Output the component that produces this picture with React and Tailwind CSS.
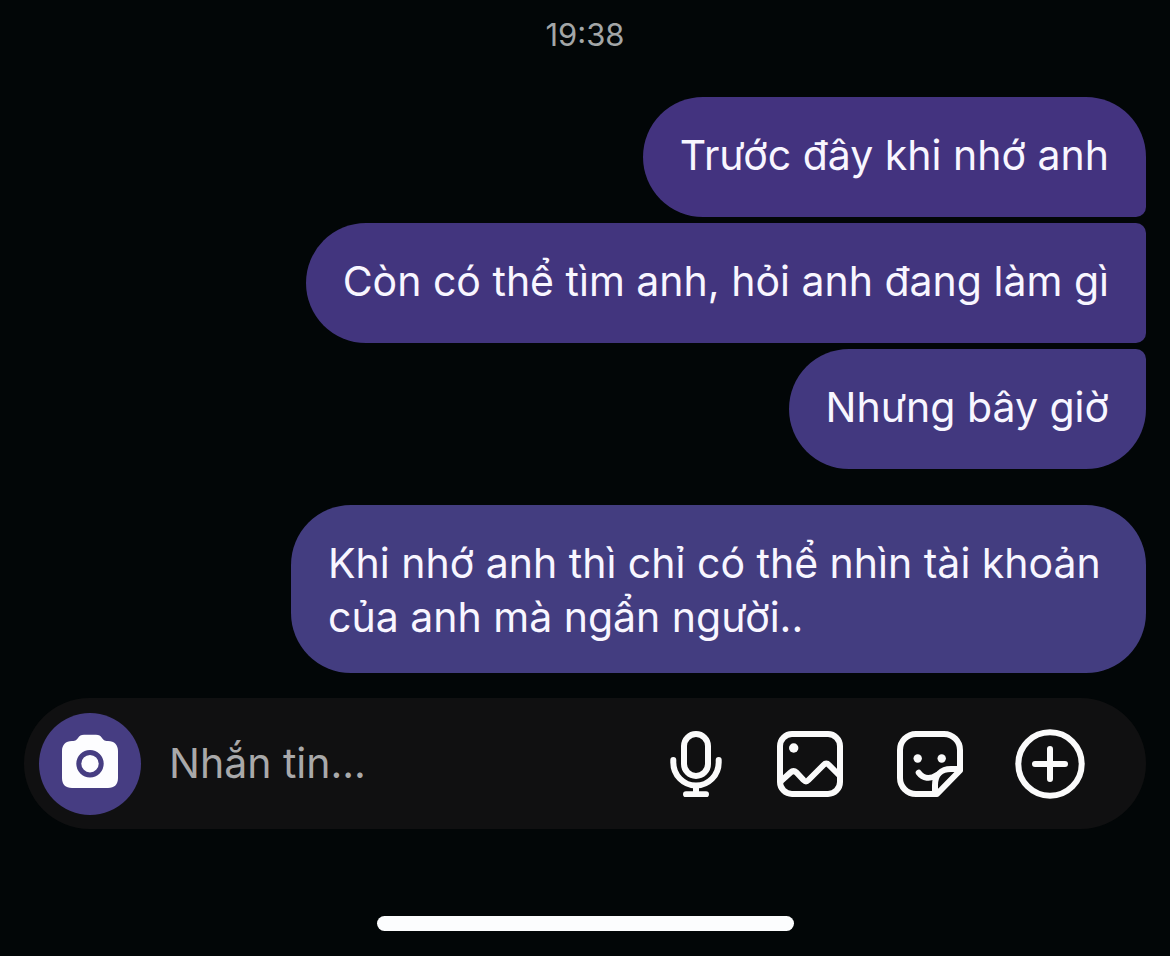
import { useState } from "react";

const messages = [
  {
    text: "Trước đây khi nhớ anh",
    style: "bg-[#43337f] rounded-[60px] rounded-br-[10px] pb-[35px]",
  },
  {
    text: "Còn có thể tìm anh, hỏi anh đang làm gì",
    style: "bg-[#42357e] rounded-l-[60px] rounded-r-[10px] pb-[35px]",
  },
  {
    text: "Nhưng bây giờ",
    style: "bg-[#42387f] rounded-[60px] rounded-tr-[10px] pb-[35px]",
  },
  {
    text: "Khi nhớ anh thì chỉ có thể nhìn tài khoản của anh mà ngẩn người..",
    style: "bg-[#433d80] rounded-[60px] pb-[29px] mt-[30px]",
  },
];

const CameraIcon = () => (
  <svg viewBox="0 0 102 102" className="w-full h-full" aria-hidden="true">
    <path
      fill="#fdfdff"
      d="M33 28C37 28 38 26.500 39 25C40.500 22.500 42 21.700 45 21.700H57C60 21.700 61.500 22.500 63 25C64 26.500 65 28 69 28C75.500 28 79 32 79 38V65C79 71.500 75.500 75 69 75H33C26.500 75 23 71.500 23 65V38C23 32 26.500 28 33 28Z"
    />
    <circle cx="51" cy="50.700" r="11.200" fill="none" stroke="#463d82" strokeWidth="5" />
  </svg>
);

const MicIcon = () => (
  <svg viewBox="0 0 54 66" className="w-full h-full" fill="none" stroke="currentColor" strokeWidth="6" strokeLinecap="round" aria-hidden="true">
    <rect x="15" y="3" width="24" height="42" rx="12" />
    <path d="M4.300 29V31.500A22.700 23 0 0 0 49.700 31.500V29" />
    <path d="M27 55V63M17 63.300H37" />
  </svg>
);

const ImageIcon = () => (
  <svg viewBox="0 0 66 66" className="w-full h-full" fill="none" stroke="currentColor" strokeWidth="6" strokeLinejoin="round" aria-hidden="true">
    <rect x="3" y="3" width="60" height="60" rx="12" />
    <path d="M3 51L13.500 41.500Q16.500 38.800 19.500 41.500L26.500 49Q29 51.500 31.500 49L46.500 34Q49.300 31.200 52 34L63 45" />
    <circle cx="16.700" cy="17" r="4.700" fill="currentColor" stroke="none" />
  </svg>
);

const StickerIcon = () => (
  <svg viewBox="0 0 66 66" className="w-full h-full" fill="none" stroke="currentColor" strokeWidth="6" strokeLinecap="round" strokeLinejoin="round" aria-hidden="true">
    <path d="M40 63H19A16 16 0 0 1 3 47V19A16 16 0 0 1 19 3H47A16 16 0 0 1 63 19V39.500Z" />
    <path d="M38 62V54C38 44 44 38 54 38H62" />
    <path d="M21.700 41.700C26 47.500 33 48.500 40 44" />
    <circle cx="20.700" cy="27.500" r="4.200" fill="currentColor" stroke="none" />
    <circle cx="44.700" cy="27.500" r="4.200" fill="currentColor" stroke="none" />
  </svg>
);

const PlusIcon = () => (
  <svg viewBox="0 0 66 66" className="w-full h-full overflow-visible" fill="none" stroke="currentColor" strokeWidth="6" strokeLinecap="round" aria-hidden="true">
    <circle cx="33" cy="33" r="31.700" />
    <path d="M33 18V48M18 33H48" />
  </svg>
);

const App = () => {
  const [message, setMessage] = useState("");

  return (
    <div className="min-h-screen bg-[#020607] font-['Inter',sans-serif] flex flex-col">
      <main className="flex flex-col px-6">
        <time className="mt-[15px] text-center text-[31px] leading-[40px] text-[#a3a6a7]">
          19:38
        </time>

        <div className="mt-[42px] flex flex-col items-end gap-[6px]">
          {messages.map((item) => (
            <p
              key={item.text}
              className={`${item.style} max-w-[855px] px-[37px] pt-[31px] text-[41px] leading-[54px] text-[#f8f6ff]`}
            >
              {item.text}
            </p>
          ))}
        </div>
      </main>

      <form
        className="mx-6 mt-[25px] h-[131px] rounded-full bg-[#101011] pl-[15px] pr-[63px] flex items-center"
        onSubmit={(e) => e.preventDefault()}
      >
        <button type="button" aria-label="Camera" className="w-[102px] h-[102px] shrink-0 rounded-full bg-[#463d82]">
          <CameraIcon />
        </button>
        <input
          type="text"
          aria-label="Nhắn tin"
          placeholder="Nhắn tin..."
          className="ml-[28px] min-w-0 flex-1 h-[60px] bg-transparent text-[41px] text-white placeholder:text-[#a9a9aa] outline-none"
          value={message}
          onChange={(e) => setMessage(e.target.value)}
        />
        <div className="flex gap-[54px] text-[#fafafa]">
          <button type="button" aria-label="Micro" className="w-[54px] h-[66px]">
            <MicIcon />
          </button>
          <button type="button" aria-label="Ảnh" className="w-[66px] h-[66px]">
            <ImageIcon />
          </button>
          <button type="button" aria-label="Nhãn dán" className="w-[66px] h-[66px]">
            <StickerIcon />
          </button>
          <button type="button" aria-label="Thêm" className="w-[66px] h-[66px]">
            <PlusIcon />
          </button>
        </div>
      </form>

      <div className="mx-auto mt-auto mb-[25px] h-[15px] w-[417px] rounded-full bg-[#fcfdfe]" />
    </div>
  );
};

export default App;
